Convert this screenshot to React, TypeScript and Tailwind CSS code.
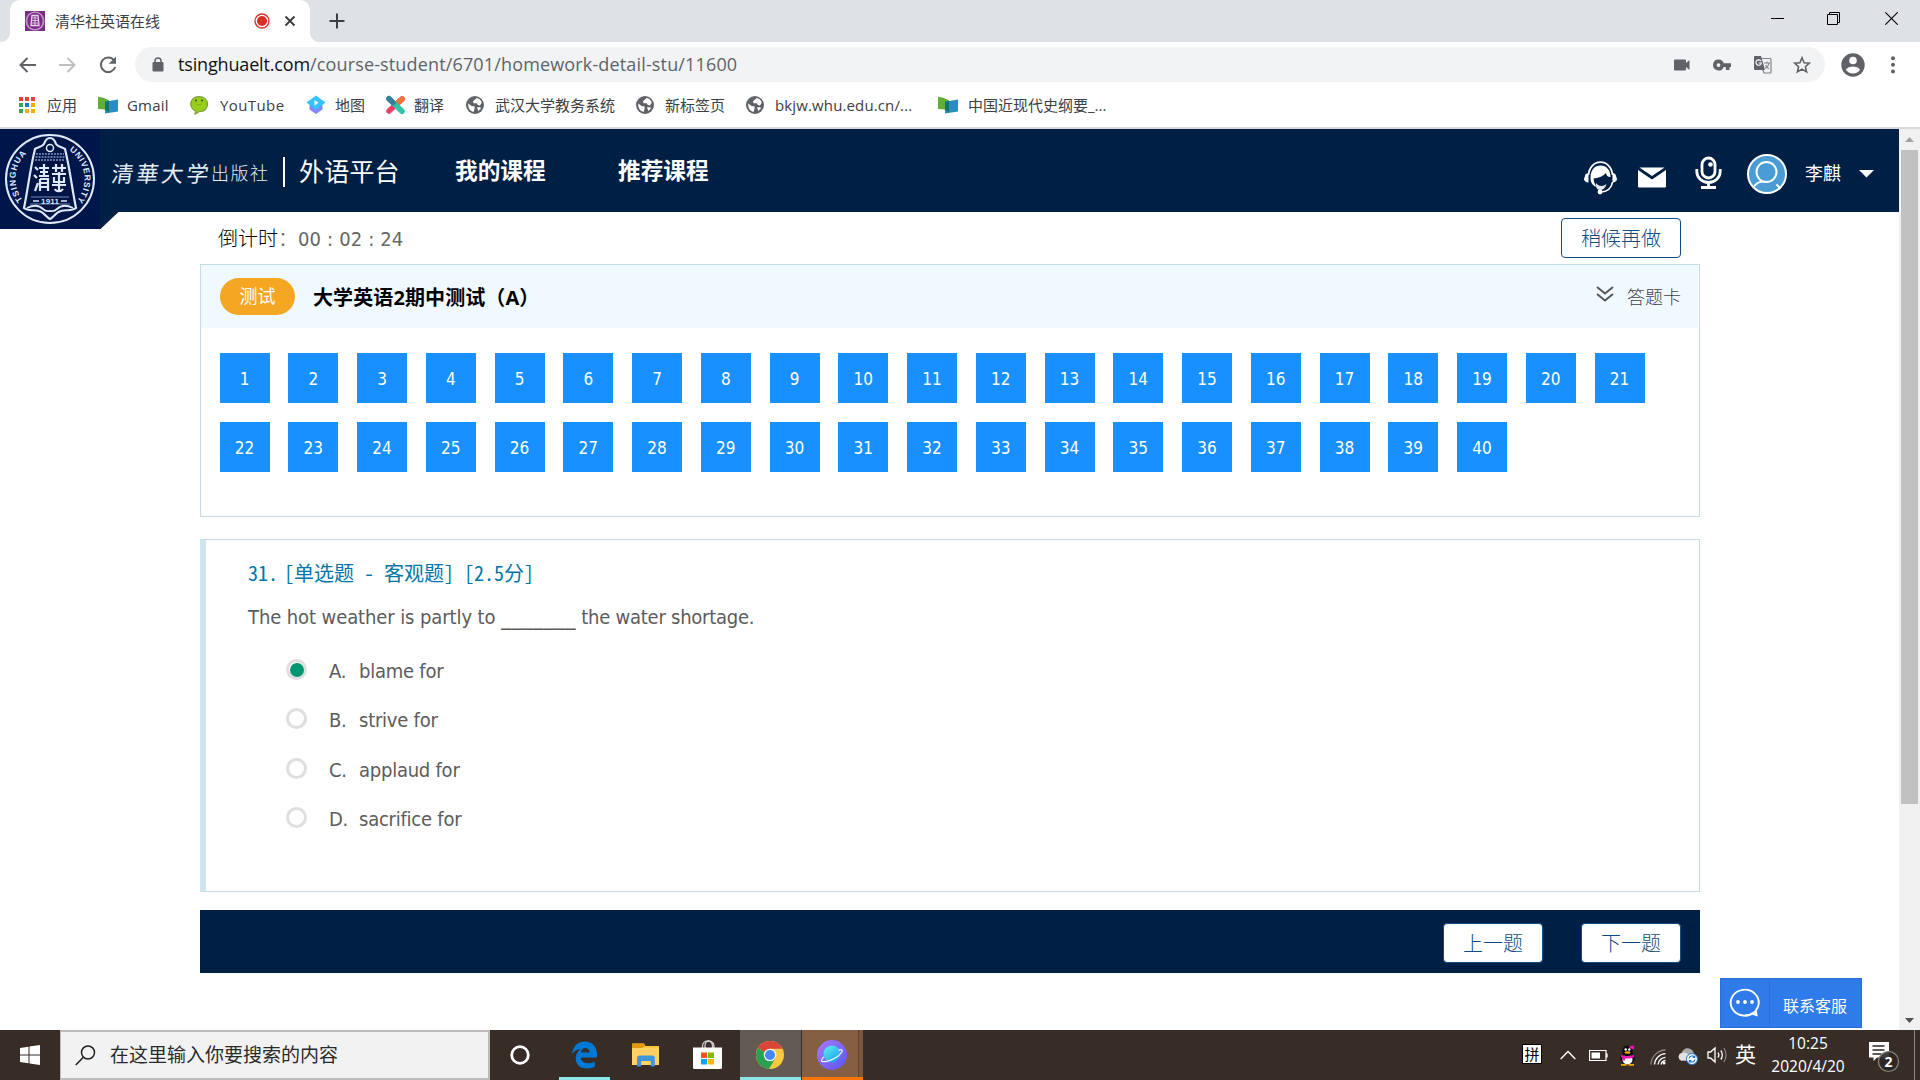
import React from "react";

const svgProps = { fill: "none", xmlns: "http://www.w3.org/2000/svg" };

/* ---------- Browser icons ---------- */
function SealIcon() {
  return (
    <svg {...svgProps} width="20" height="20" viewBox="0 0 20 20">
      <rect width="20" height="20" fill="#7b2d86" />
      <circle cx="10" cy="10" r="8.8" stroke="#c9a3cf" strokeWidth="1.2" />
      <path d="M7 4.500h6l1 10H6z" stroke="#e6d2e9" strokeWidth="1.3" />
      <path d="M7.500 7h5M7 9.500h6M7 12h6M10 5v9" stroke="#e6d2e9" strokeWidth="0.9" />
      <path d="M3 5c-1.500 3-1.500 7 0 10M17 5c1.500 3 1.500 7 0 10" stroke="#b98cc0" strokeWidth="1.400" />
    </svg>
  );
}

function GlobeIcon() {
  return (
    <svg {...svgProps} width="18" height="18" viewBox="0 0 18 18">
      <circle cx="9" cy="9" r="9" fill="#5f6368" />
      <path d="M2.200 7.500L6 10.200h2.600v2.300L7.600 15.900C4.300 15.300 1.900 12.300 2.200 7.500zM7 5.200l3.600-3.300c2.600.5 4.500 2.200 5.200 4.800l-1.900 2.800-2.100-.6-1-1.700H7.600z" fill="#fff" />
      <path d="M11 11.300h3.200l.8 1.200-2.700 2.400z" fill="#fff" />
    </svg>
  );
}

function BookIcon() {
  return (
    <svg {...svgProps} width="21" height="18" viewBox="0 0 21 18">
      <path d="M0 1c4 0 7 1 11 3.500V16c-3-2.400-6-3-11-3z" fill="#60b034" />
      <path d="M20 3.500v12L7 17.500V5.800z" fill="#2b8cc0" />
      <path d="M7 5.800l4-.9v11.100L7 14z" fill="#15727c" />
    </svg>
  );
}

function AppsIcon() {
  const cells = ["#ea4335", "#ea4335", "#ea4335", "#34a853", "#1a73e8", "#fbab06", "#34a853", "#fbab06", "#fbab06"];
  return (
    <span className="grid h-4 w-4 grid-cols-3 gap-0.5">
      {cells.map((c, i) => (
        <span key={i} style={{ background: c }} />
      ))}
    </span>
  );
}

function SmileIcon() {
  return (
    <svg {...svgProps} width="19" height="19" viewBox="0 0 19 19">
      <path d="M9 .7c5 0 8.500 2.800 8.500 7.300 0 4.600-3 7.500-8 7.500-1 0-2 1.700-4.500 2.300.6-1 .5-2.300.2-3C2.500 13.500.8 11.200.8 8 .8 3.500 4 .7 9 .7z" fill="#97cd1b" stroke="#7d9b3a" strokeWidth="1.200" />
      <circle cx="6" cy="4.600" r="1" fill="#3a4f0d" />
      <circle cx="12" cy="4.600" r="1" fill="#3a4f0d" />
      <path d="M6 8c1.800 1 4.200 1 6 0" stroke="#7fb50f" strokeWidth="0.800" />
    </svg>
  );
}

function DiamondIcon() {
  return (
    <svg {...svgProps} width="20" height="20" viewBox="0 0 20 20">
      <path d="M3.500 10v4.500L10 19l6.500-4.500V10z" fill="#8187ff" />
      <path d="M10 .5L19.500 7.500 10 15 .5 7.500z" fill="#36c3fb" />
      <path d="M8.500 5l4 2.700-4 2.800z" fill="#fff" />
    </svg>
  );
}

function CrossIcon() {
  return (
    <svg {...svgProps} width="21" height="20" viewBox="0 0 21 20">
      <path d="M17 4L4 16" stroke="#ee3f66" strokeWidth="5.500" strokeLinecap="round" />
      <path d="M17.200 4L11 9.700" stroke="#f5743c" strokeWidth="5.500" strokeLinecap="round" />
      <path d="M4 3.700L17 16.300" stroke="#2fc3a8" strokeWidth="5.500" strokeLinecap="round" />
      <path d="M4 3.700L8 7.600" stroke="#35809b" strokeWidth="5.500" strokeLinecap="round" />
    </svg>
  );
}

const bookmarks: { icon: React.ReactNode; label: string; cell: string; iconBox: string; track?: string }[] = [
  { icon: <AppsIcon />, label: "应用", cell: "w-[79px]", iconBox: "w-[28px]" },
  { icon: <BookIcon />, label: "Gmail", cell: "w-[92px]", iconBox: "w-[29px]", track: "tracking-[0.2px]" },
  { icon: <SmileIcon />, label: "YouTube", cell: "w-[116px]", iconBox: "w-[30px]", track: "tracking-[0.4px]" },
  { icon: <DiamondIcon />, label: "地图", cell: "w-[79px]", iconBox: "w-[29px]" },
  { icon: <CrossIcon />, label: "翻译", cell: "w-[81px]", iconBox: "w-[29px]" },
  { icon: <GlobeIcon />, label: "武汉大学教务系统", cell: "w-[170px]", iconBox: "w-[29px]" },
  { icon: <GlobeIcon />, label: "新标签页", cell: "w-[110px]", iconBox: "w-[29px]" },
  { icon: <GlobeIcon />, label: "bkjw.whu.edu.cn/...", cell: "w-[192px]", iconBox: "w-[29px]", track: "tracking-[0.13px]" },
  { icon: <BookIcon />, label: "中国近现代史纲要_...", cell: "w-[200px]", iconBox: "w-[30px]" },
];

function TabStrip() {
  return (
    <div className="flex h-[42px] items-end bg-[#dee1e6]">
      <div className="flex h-[42px] w-[10px] items-end justify-end">
        <svg {...svgProps} width="10" height="10"><path d="M10 0v10H0c6 0 10-4 10-10z" fill="#fff" /></svg>
      </div>
      <div className="flex h-[42px] w-[300px] items-center rounded-t-[10px] bg-white pl-[15px]">
        <SealIcon />
        <span className="ml-[10px] w-[199px] text-[15px] leading-5 text-[#3c4043]">清华社英语在线</span>
        <svg {...svgProps} width="16" height="16" className="shrink-0">
          <circle cx="8" cy="8" r="7" stroke="#d93025" strokeWidth="1.300" />
          <circle cx="8" cy="8" r="5" fill="#d93025" />
        </svg>
        <svg {...svgProps} width="12" height="12" className="ml-[14px] shrink-0">
          <path d="M1.500 1.500l9 9M10.500 1.500l-9 9" stroke="#3c4043" strokeWidth="2" />
        </svg>
      </div>
      <svg {...svgProps} width="10" height="10"><path d="M0 0v10h10C4 10 0 6 0 0z" fill="#fff" /></svg>
      <div className="ml-[9px] flex h-[42px] items-center">
        <svg {...svgProps} width="16" height="16"><path d="M8 .5v15M.5 8h15" stroke="#3c4043" strokeWidth="2" /></svg>
      </div>
      <div className="ml-auto flex h-[42px] items-center pb-[5px] pr-[22px]">
        <svg {...svgProps} width="13" height="14" className="mr-[43px]"><path d="M0 6.500h13" stroke="#000" /></svg>
        <svg {...svgProps} width="13" height="13" className="mr-[45px]"><path d="M.5 2.500h10v10h-10zM2.500 2.500v-2h10v10h-2" stroke="#000" /></svg>
        <svg {...svgProps} width="13" height="13"><path d="M.3.3l12.400 12.400M12.700.3L.3 12.700" stroke="#000" strokeWidth="1.100" /></svg>
      </div>
    </div>
  );
}

function Toolbar() {
  return (
    <div className="flex h-[45px] items-center bg-white pl-[19px]">
      <svg {...svgProps} width="17" height="16"><path d="M17 8H2M8.500 1L1.500 8l7 7" stroke="#5f6368" strokeWidth="2" /></svg>
      <svg {...svgProps} width="17" height="16" className="ml-[23px]"><path d="M0 8h15M8.500 1l7 7-7 7" stroke="#bdc1c6" strokeWidth="2" /></svg>
      <svg {...svgProps} width="18" height="18" className="ml-[23px]">
        <path d="M15.200 4.500A7.300 7.300 0 1 0 16.200 11" stroke="#5f6368" strokeWidth="2" />
        <path d="M17 .5v7.300h-7.300z" fill="#5f6368" />
      </svg>
      <div className="ml-[18px] flex h-[35px] w-[1690px] items-center rounded-full bg-[#f1f3f4] pl-[17px]">
        <svg {...svgProps} width="12" height="15">
          <rect x="0.500" y="5" width="11" height="9.500" rx="1" fill="#5f6368" />
          <path d="M3 6V4a3 3 0 0 1 6 0v2" stroke="#5f6368" strokeWidth="1.500" />
        </svg>
        <span className="ml-[14px] pb-[2px] text-[18px] leading-6 tracking-[0.150px] text-[#5f6368]">
          <span className="tracking-[-0.16px] text-[#111]">tsinghuaelt.com</span>/course-student/6701/homework-detail-stu/11600
        </span>
        <div className="ml-auto flex items-center pr-[14px]">
          <svg {...svgProps} width="16" height="12" className="mr-[23px]"><path d="M1 .5h10a1 1 0 0 1 1 1V4l3.500-3v10L12 8v2.500a1 1 0 0 1-1 1H1a1 1 0 0 1-1-1v-9a1 1 0 0 1 1-1z" fill="#5f6368" /></svg>
          <svg {...svgProps} width="18" height="12" className="mr-[22px]">
            <path fillRule="evenodd" d="M5.500.5a5.500 5.500 0 0 1 5.200 3.700H18v3.700h-1.500v3.200h-3.700V7.900h-2.100A5.500 5.500 0 1 1 5.500.5zm0 3.700a1.900 1.900 0 1 0 0 3.800 1.900 1.900 0 0 0 0-3.800z" fill="#5f6368" />
          </svg>
          <svg {...svgProps} width="19" height="19" className="mr-[21px]">
            <path d="M9 3.500h8a1 1 0 0 1 1 1V17a1 1 0 0 1-1 1h-6L9.500 14" stroke="#80868b" strokeWidth="1.200" />
            <path d="M2 1h6l4 14H2a1 1 0 0 1-1-1V2a1 1 0 0 1 1-1z" fill="#5f6368" />
            <path d="M8 6.200A2.700 2.700 0 1 0 8.300 8H5.600" stroke="#fff" strokeWidth="1.200" />
            <path d="M11 8h6M14 6.500V8M16 8c-.5 2.500-2 4.500-4 5.500M12.500 10c1 2 2 3 3.500 3.800" stroke="#80868b" strokeWidth="1.100" />
          </svg>
          <svg {...svgProps} width="18" height="18"><path d="M9 1.800l2.100 4.900 5.300.5-4 3.500 1.200 5.200L9 13.100l-4.600 2.800 1.200-5.200-4-3.500 5.300-.5z" stroke="#5f6368" strokeWidth="1.600" /></svg>
        </div>
      </div>
      <svg {...svgProps} width="24" height="24" className="ml-[16px]">
        <circle cx="12" cy="12" r="11.700" fill="#5f6368" />
        <circle cx="12" cy="7.500" r="3.800" fill="#fff" />
        <path d="M4.800 16.800c1.500-2.300 4.500-3.300 7.200-3.300s5.700 1 7.200 3.300A8.600 8.600 0 0 1 12 20.500a8.600 8.600 0 0 1-7.200-3.700z" fill="#fff" />
      </svg>
      <svg {...svgProps} width="4" height="18" className="ml-[26px]">
        <circle cx="2" cy="2.200" r="2" fill="#5f6368" /><circle cx="2" cy="8.800" r="2" fill="#5f6368" /><circle cx="2" cy="15.500" r="2" fill="#5f6368" />
      </svg>
    </div>
  );
}

function BookmarkBar() {
  return (
    <div className="flex h-[42px] items-center border-b-2 border-[#d9dadd] bg-white pb-1 pl-[19px] text-[15px] text-[#3c4043]">
      {bookmarks.map((b) => (
        <div key={b.label} className={`flex shrink-0 items-center whitespace-nowrap ${b.cell}`}>
          <span className={`flex shrink-0 items-center ${b.iconBox}`}>{b.icon}</span>
          <span className={`leading-5 ${b.track ?? ""}`}>{b.label}</span>
        </div>
      ))}
    </div>
  );
}

/* ---------- Site header ---------- */
function Emblem() {
  return (
    <svg {...svgProps} width="100" height="100" viewBox="0 0 100 100">
      <rect width="100" height="100" fill="#00164a" />
      <circle cx="50" cy="50" r="44" stroke="#dfe9fb" strokeWidth="2" />
      <defs>
        <path id="arcLeft" d="M22.800 71.200A34.500 34.500 0 0 1 27.800 23.600" />
        <path id="arcRight" d="M69.300 21.500A34.500 34.500 0 0 1 75.300 73.600" />
      </defs>
      <text fill="#dfe9fb" fontSize="8.500" fontWeight="700" fontFamily="Liberation Sans, sans-serif" textLength="51">
        <textPath href="#arcLeft" startOffset="0">TSINGHUA</textPath>
      </text>
      <text fill="#dfe9fb" fontSize="8.500" fontWeight="700" fontFamily="Liberation Sans, sans-serif" textLength="57">
        <textPath href="#arcRight" startOffset="0">UNIVERSITY</textPath>
      </text>
      <path d="M35 20c3-2 7-2 9-5 1-3 3-6 6-6s5 3 6 6c2 3 6 3 9 5 5 20 7 40 11 59-5 4-10 1-15 3-5 1-7 6-11 8-4-2-6-7-11-8-5-2-10 1-15-3 4-19 6-39 11-59z" fill="#001544" stroke="#dfe9fb" strokeWidth="2.200" />
      <circle cx="50" cy="19" r="3.500" stroke="#dfe9fb" strokeWidth="1.500" />
      <path d="M36 25h28M35.500 28h29M35 31h30" stroke="#7f96c4" strokeWidth="1.500" strokeDasharray="2 1" />
      <g stroke="#dfe9fb" strokeWidth="2.200">
        <path d="M35 38l3 3M34 46l3 3M35 62l3-8M39 39h10M40 43h8M39 47h10M44 35v12M40 50h8v12M40 50v12M40 54h8M40 58h8" />
        <path d="M52 39h14M56 35v8M62 35v8M52 45h14M59 43v20M54 48v5h10v-5M52 56h14M55 60c1 3 6 3 8 0" />
      </g>
      <path d="M31 68h38M30 75h40" stroke="#6d86b8" strokeWidth="1" />
      <path d="M33 72h6M61 72h6" stroke="#dfe9fb" strokeWidth="1.300" />
      <text x="50" y="75" textAnchor="middle" fill="#dfe9fb" fontSize="8" fontWeight="700" fontFamily="Liberation Sans, sans-serif" textLength="18">1911</text>
      <path d="M27 79c6-3 12-3 16 1 3 3 5 2 7 2s4 1 7-2c4-4 10-4 16-1" stroke="#dfe9fb" strokeWidth="1.800" />
    </svg>
  );
}

function SiteHeader() {
  return (
    <header className="relative flex h-[83px] shrink-0 items-start bg-[#001f45] text-white">
      <div className="absolute left-0 top-0 flex">
        <Emblem />
        <svg {...svgProps} width="19" height="100"><path d="M0 0h19v82.500L.5 100H0z" fill="#001f45" /></svg>
      </div>
      <div className="flex h-[86px] w-full items-center pl-[112px]">
        <div className="flex w-[157px] items-center whitespace-nowrap text-[#e8edf5]">
          <span className="w-[99px] skew-x-[-8deg] font-['Noto_Sans_CJK_SC'] text-[22px] leading-8 tracking-[3px]">清華大学</span>
          <span className="font-['Noto_Sans_CJK_SC'] text-[18px] font-light leading-8 tracking-[1.500px]">出版社</span>
        </div>
        <span className="ml-[14px] h-[30px] w-[2px] bg-white" />
        <span className="mb-[2px] ml-[14px] w-[101px] whitespace-nowrap text-[25px] leading-8 tracking-[0.2px]">外语平台</span>
        <span className="mb-[2px] ml-[55px] w-[92px] whitespace-nowrap text-[22.700px] font-bold leading-8">我的课程</span>
        <span className="mb-[2px] ml-[71px] w-[92px] whitespace-nowrap text-[22.700px] font-bold leading-8">推荐课程</span>
        <div className="ml-auto flex h-full items-center pr-[25px] pt-[4px]">
          <svg {...svgProps} width="33" height="34" viewBox="0 0 33 34" className="mt-[7px]">
            <path d="M4.500 14C5 6.500 10 1.200 16.500 1.200S28 6.500 28.500 14" stroke="#fff" strokeWidth="1.800" />
            <path d="M1 15c0-2 2-3 3.500-3v9.500C2.500 21.500 0 20 0 18zM32 15c0-2-2-3-3.500-3v9.500c2 0 4.500-1.500 4.500-3.500z" fill="#fff" />
            <path d="M6.500 17C6.500 9 10.500 4.500 16.500 4.500S26.500 9 26.500 16c-3 0-4-1.500-4.500-4-3 3.500-8 5-12.500 5.500.5 4 1.500 6.500 3.500 8.500-4-1-6.500-4-6.500-9z" fill="#fff" />
            <path d="M12 22c2.500 3.500 7 4 10.500 1-1 4-3.500 6-6.500 6s-4.500-3-4-7z" fill="#fff" opacity=".9" />
            <path d="M28.500 21c-.8 5.500-5 9.500-11.500 10" stroke="#fff" strokeWidth="1.700" />
            <circle cx="16" cy="31" r="2.400" fill="#fff" />
          </svg>
          <svg {...svgProps} width="28" height="21" className="ml-[21px] mt-[7px]">
            <path d="M0 3v15.500A1.500 1.500 0 0 0 1.500 20.500h25a1.500 1.500 0 0 0 1.500-2V3L14 12.500z" fill="#fff" />
            <path d="M1.500 .5h25L14 9z" fill="#fff" />
          </svg>
          <svg {...svgProps} width="27" height="34" viewBox="0 0 27 34" className="ml-[29px] mt-[-2px]">
            <rect x="7" y="2" width="13" height="20" rx="6.500" stroke="#fff" strokeWidth="2.800" />
            <circle cx="15.500" cy="8.500" r="2.300" fill="#fff" />
            <path d="M1.800 13v2.500c0 6 5 11 11.700 11s11.700-5 11.700-11V13M13.500 26v5M6 31.500h15" stroke="#fff" strokeWidth="2.800" />
          </svg>
          <svg {...svgProps} width="40" height="40" className="ml-[25px]">
            <circle cx="20" cy="20" r="19" fill="#4a9dd4" stroke="#fff" strokeWidth="2" />
            <circle cx="19.500" cy="18" r="10" stroke="#fff" strokeWidth="1.900" />
            <path d="M6.500 33.500C9 28.500 12.500 27.500 17 27.500M29.500 30.500l4 4" stroke="#fff" strokeWidth="1.900" />
          </svg>
          <span className="mb-[3px] ml-[18px] w-[36px] whitespace-nowrap text-[18px] leading-6">李麒</span>
          <svg {...svgProps} width="15" height="8" className="ml-[18px]"><path d="M0 0h15L7.500 7.500z" fill="#fff" /></svg>
        </div>
      </div>
    </header>
  );
}

/* ---------- Answer card ---------- */
const numbers = Array.from({ length: 40 }, (_, i) => i + 1);

function AnswerCard() {
  return (
    <section className="flex h-[253px] flex-col border border-[#c5dbe6] bg-white">
      <div className="mr-px flex h-[63px] shrink-0 items-center bg-[#f0f9ff] pl-[19px] pr-[18px]">
        <span className="flex h-[37px] w-[75px] items-center justify-center rounded-full bg-[#f5a623] text-[18px] text-white">测试</span>
        <span className="ml-[18px] pt-[3px] text-[20px] font-bold tracking-[0.1px] text-black">大学英语2期中测试（A）</span>
        <svg {...svgProps} width="18" height="16" className="mb-[6px] ml-auto"><path d="M1 1l8 6.500L17 1M1 8l8 6.500L17 8" stroke="#555" strokeWidth="1.900" /></svg>
        <span className="ml-[13px] w-[53px] whitespace-nowrap pt-[2px] text-[18px] font-light text-[#444]">答题卡</span>
      </div>
      <div className="flex w-[1460px] flex-wrap gap-x-[18.750px] gap-y-[19px] pl-[18.600px] pt-[25px]">
        {numbers.map((n) => (
          <button key={n} className="flex h-[50px] w-[50px] items-center justify-center bg-[#1890ff] pt-[3px] font-['DejaVu_Sans_Condensed','DejaVu_Sans',sans-serif] text-[17px] text-white [font-stretch:condensed]">
            {n}
          </button>
        ))}
      </div>
    </section>
  );
}

/* ---------- Question ---------- */
const options = [
  { key: "A.", text: "blame for", on: true },
  { key: "B.", text: "strive for", on: false },
  { key: "C.", text: "applaud for", on: false },
  { key: "D.", text: "sacrifice for", on: false },
];

function Question() {
  return (
    <section className="mt-[22px] h-[353px] border border-l-[6px] border-[#c5dbe6] border-l-[#d0e6ee] bg-white pl-[42px] font-['DejaVu_Sans_Condensed','DejaVu_Sans',sans-serif] text-[20px] tracking-[-0.24px] text-[#5c5c5c] [font-stretch:condensed]">
      <div className="mt-[17px] flex whitespace-pre font-['Noto_Sans_CJK_SC'] text-[20px] leading-8 tracking-normal text-[#0076a8] [font-feature-settings:'hwid']">
        <span className="w-[36px]">31.</span>
        <span>[单选题 - 客观题] [2.5分]</span>
      </div>
      <div className="mt-[12px] flex h-8 whitespace-pre leading-8">
        <span className="tracking-[-0.1px]">The hot weather is partly to </span>
        <span className="font-['Open_Sans'] text-[24.700px] tracking-normal">_______</span>
        <span> the water shortage.</span>
      </div>
      <div className="mt-[22px] pl-[38px]">
        {options.map((o) => (
          <div key={o.key} className="flex h-[49.400px] items-start leading-8">
            <span className="mt-[4px] flex h-[21px] w-[21px] items-center justify-center rounded-full border-[3px] border-[#dfdfdf] bg-white">
              {o.on && <span className="h-[14px] w-[14px] shrink-0 rounded-full bg-[#009673]" />}
            </span>
            <span className="ml-[22px] w-[30px]">{o.key}</span>
            <span>{o.text}</span>
          </div>
        ))}
      </div>
    </section>
  );
}

function NavButton({ label }: { label: string }) {
  return (
    <button className="mt-px h-[40px] w-[100px] rounded-[4px] border border-[#0f4c81] bg-white pt-[2px] text-[20px] font-light leading-none text-[#0f4c81]">{label}</button>
  );
}

function Page() {
  return (
    <div className="flex h-[901px]">
      <div className="relative flex w-[1899px] flex-col bg-white">
        <SiteHeader />
        <main className="ml-[200px] w-[1500px]">
          <div className="flex h-[52px] items-center justify-between pl-[18px] pr-[19px]">
            <span className="flex items-center whitespace-pre pt-[2px] text-[20px] text-[#666]">
              <span className="w-[60px] font-light text-black">倒计时</span>
              <span className="w-[20px] font-light">：</span>
              <span className="font-['DejaVu_Sans_Condensed','DejaVu_Sans',sans-serif] text-[20px] tracking-[0.150px] [font-stretch:condensed]">00 : 02 : 24</span>
            </span>
            <button className="h-[40px] w-[120px] rounded-[4px] border border-[#0f4c81] bg-white pt-px text-[20px] font-light text-[#0f4c81]">稍候再做</button>
          </div>
          <AnswerCard />
          <Question />
          <div className="mt-[18px] flex h-[63px] items-center justify-end gap-[38px] bg-[#001f45] pr-[19px] pt-px">
            <NavButton label="上一题" />
            <NavButton label="下一题" />
          </div>
        </main>
        <div className="absolute bottom-[2px] right-[37px] flex h-[50px] w-[142px] items-center border border-[#2b6fd6] bg-[#2f7bea] text-white">
          <span className="flex h-full w-[49px] items-center justify-center border-r border-[#2b6fd6] pb-[2px]">
            <svg {...svgProps} width="32" height="30">
              <path d="M26 24.500A14 13 0 1 1 29.500 18c-.5 2.500-1.500 4-2.700 5.500l.7 4.500-4.500-1.500c-2 1.200-4.500 1.700-7 1.700" stroke="#fff" strokeWidth="1.900" />
              <circle cx="9" cy="15" r="1.900" fill="#fff" /><circle cx="16" cy="15" r="1.900" fill="#fff" /><circle cx="23" cy="15" r="1.900" fill="#fff" />
            </svg>
          </span>
          <span className="ml-[13px] pt-[5px] text-[16px]">联系客服</span>
        </div>
      </div>
      <div className="flex w-[21px] flex-col items-center bg-[#f1f1f1]">
        <div className="flex h-[21px] items-center"><svg {...svgProps} width="9" height="5"><path d="M0 5L4.500 0 9 5z" fill="#a3a3a3" /></svg></div>
        <div className="h-[654px] w-[17px] bg-[#c1c1c1]" />
        <div className="mt-auto flex h-[20px] items-center"><svg {...svgProps} width="9" height="5"><path d="M0 0h9L4.500 5z" fill="#505050" /></svg></div>
      </div>
    </div>
  );
}

/* ---------- Taskbar ---------- */
function TaskCell({ children, cls }: { children: React.ReactNode; cls: string }) {
  return <div className={`flex h-[50px] shrink-0 items-center justify-center ${cls}`}>{children}</div>;
}

function Taskbar() {
  return (
    <div className="flex h-[50px] items-center bg-[#372d26] text-white">
      <TaskCell cls="w-[60px]">
        <svg {...svgProps} width="20" height="20"><path d="M0 3l8.500-1.300v7.800H0zM9.500 1.500L20 0v9.500H9.500zM0 10.500h8.500v7.800L0 17zM9.500 10.500H20V20L9.500 18.500z" fill="#fff" /></svg>
      </TaskCell>
      <div className="flex h-[50px] w-[430px] shrink-0 items-center border-2 border-l border-[#bcbcbc] bg-[#f2f2f2] pl-[14px]">
        <svg {...svgProps} width="21" height="21"><circle cx="13" cy="7.500" r="6.500" stroke="#222" strokeWidth="1.500" /><path d="M8.300 12.200L.8 20" stroke="#222" strokeWidth="1.600" /></svg>
        <span className="ml-[14px] whitespace-nowrap text-[19px] leading-6 text-[#2b2b2b]">在这里输入你要搜索的内容</span>
      </div>
      <TaskCell cls="w-[59px]">
        <svg {...svgProps} width="20" height="20"><circle cx="10" cy="10" r="8.300" stroke="#fff" strokeWidth="2.800" /></svg>
      </TaskCell>
      <TaskCell cls="ml-[10px] w-[51px] border-b-[3px] border-[#8ce5e8] pt-[3px]">
        <svg {...svgProps} width="25" height="28">
          <path d="M0 13C1 5 6 .5 13 .5 20.500.5 25 6 25 13v3.500H8.800c.3 4 3.500 5.700 7.500 5.700 2.700 0 4.700-.7 6.500-1.800v5.400c-2.300 1.200-5 1.700-8 1.700C8 27.500 3.700 23.500 3.700 17.500c0-4 2-7.500 5.500-9.500C5 8.500 2 10 0 13zm9-1.500h8.500C17.500 8.800 16 7 13.300 7 10.800 7 9.300 9 9 11.500z" fill="#0078d7" fillRule="evenodd" />
        </svg>
      </TaskCell>
      <TaskCell cls="ml-[11px] w-[50px]">
        <svg {...svgProps} width="28" height="24">
          <path d="M0 1.500A1 1 0 0 1 1 .5h10.500L13.500 3H27v19H0z" fill="#ffd164" />
          <path d="M0 1.500A1 1 0 0 1 1 .5h11.500v3L10.500 5H0z" fill="#e09a0b" />
          <path d="M13 3h14v2H11.500z" fill="#fbc53d" />
          <path d="M5 23.500V15a2.500 2.500 0 0 1 2.500-2.500h12.800A2.500 2.500 0 0 1 22.800 15v8.500h-4V18h-9.600v5.500z" fill="#3f96dd" />
        </svg>
      </TaskCell>
      <TaskCell cls="ml-[10px] w-[54px]">
        <svg {...svgProps} width="29" height="30" className="ml-[-2px]">
          <path d="M9.500 8V6c0-3 2.300-5 5-5s5 2 5 5v2M12 8V6c0-3 1.500-5 4-5s5 2 5 5v2" stroke="#cfcfcf" strokeWidth="1.300" />
          <path d="M0 7.500h29v20A1.500 1.500 0 0 1 27.500 29h-26A1.500 1.500 0 0 1 0 27.500z" fill="#fff" />
          <path d="M8 12.500h6v5.500H8z" fill="#f25022" /><path d="M15 12.500h6v5.500h-6z" fill="#7fba00" />
          <path d="M8 19h6v5.500H8z" fill="#00a4ef" /><path d="M15 19h6v5.500h-6z" fill="#ffb900" />
        </svg>
      </TaskCell>
      <TaskCell cls="ml-[5px] w-[61px] border-b-[3px] border-[#8ce5e8] bg-[#645a54] pr-[2px] pt-[3px]">
        <svg {...svgProps} width="28" height="28" viewBox="0 0 28 28">
          <circle cx="14" cy="14" r="14" fill="#f7c93e" />
          <path d="M14 14L1.900 7A14 14 0 0 0 13 28l6.500-11z" fill="#2aa14f" />
          <path d="M14 14L1.900 7A14 14 0 0 1 26.500 7.700H14z" fill="#dc4437" />
          <circle cx="14" cy="14" r="6.300" fill="#f3f3f3" /><circle cx="14" cy="14" r="5" fill="#4587f4" />
        </svg>
      </TaskCell>
      <TaskCell cls="ml-px w-[61px] border-b-[3px] border-[#fb7500] bg-[linear-gradient(90deg,#845f43_92%,#5f4230_92%,#5f4230_94%,#7a563b_94%)] pr-[2px] pt-[3px]">
        <svg {...svgProps} width="30" height="30" viewBox="0 0 30 30">
          <defs>
            <linearGradient id="orb" x1="0" y1="0" x2="30" y2="30" gradientUnits="userSpaceOnUse"><stop stopColor="#a878ff" /><stop offset="1" stopColor="#5a55f3" /></linearGradient>
            <linearGradient id="planet" x1="8" y1="6" x2="20" y2="22" gradientUnits="userSpaceOnUse"><stop stopColor="#5cf0ee" /><stop offset="1" stopColor="#1b9df0" /></linearGradient>
          </defs>
          <circle cx="15" cy="15" r="15" fill="url(#orb)" />
          <circle cx="15" cy="14" r="8.500" fill="url(#planet)" />
          <path d="M21.500 10c3-.8 4.300-.2 3.500 1.500-1.500 3.200-7 7-12 8.900-4.500 1.700-8.500 1.800-8.500 0 0-1.100 1-2.400 2.500-3.700" stroke="#e8f4ff" strokeWidth="1.300" />
        </svg>
      </TaskCell>

      <div className="ml-auto flex h-full items-center">
        <span className="mb-[2px] flex h-5 w-5 items-center justify-center border border-black bg-white text-[15px] leading-none text-black">拼</span>
        <svg {...svgProps} width="16" height="10" className="ml-[18px]"><path d="M.7 9L8 1.500 15.300 9" stroke="#fff" strokeWidth="1.400" /></svg>
        <svg {...svgProps} width="19" height="11" className="ml-[13px]"><path d="M.5.500h16.500v10H.5zM18 3.500v4" stroke="#fff" strokeWidth="1.200" /><path d="M2.500 2.500h8.500v6H2.500z" fill="#fff" /></svg>
        <svg {...svgProps} width="17" height="21" className="ml-[11px]">
          <ellipse cx="8.500" cy="13" rx="7.500" ry="6.500" fill="#111" />
          <ellipse cx="8.500" cy="14.500" rx="5" ry="5" fill="#fff" />
          <ellipse cx="8.500" cy="6" rx="5.200" ry="5.500" fill="#0b0b0b" />
          <circle cx="6.700" cy="4.500" r="1.200" fill="#fff" /><circle cx="10.300" cy="4.500" r="1.200" fill="#fff" />
          <ellipse cx="8.500" cy="7.500" rx="3" ry="1.200" fill="#f5a400" />
          <path d="M2 9.500c4 2.200 9 2.200 13 0v2.500c-4 2-9 2-13 0zM3.500 12h2.500v3.500H3.500zM10 1.500L15 .5v4L11 3.200z" fill="#f013b4" />
          <path d="M2 19h5.500v1.700H2zM9.500 19H15v1.700H9.500z" fill="#f5a400" />
        </svg>
        <svg {...svgProps} width="17" height="16" className="ml-[14px] mt-[3px]">
          <path d="M1 15.500A15 15 0 0 1 15.500 1" stroke="#8c8680" strokeWidth="1.300" />
          <path d="M4.500 15.500A11.500 11.500 0 0 1 15.500 4.700M8 15.500A8 8 0 0 1 15.500 8.300M11 15.500A5 5 0 0 1 15.500 11.500" stroke="#fff" strokeWidth="1.300" />
          <circle cx="14" cy="14" r="1.500" fill="#fff" />
        </svg>
        <svg {...svgProps} width="21" height="18" className="ml-[10px] mt-[2px]">
          <path d="M4 13.500a4 4 0 0 1 .5-7.500C6 2 9 .5 12 1.500c3 .5 4.500 3 5 5l2 7z" fill="#aaa" />
          <path d="M4 13.500a4 4 0 0 1 .5-7.500c3-1.500 6 0 8 3l2 4.500z" fill="#e0e0e0" />
          <circle cx="15" cy="12" r="5.500" fill="#fff" stroke="#1f74c9" strokeWidth="1" />
          <path d="M12 11.500a3 3 0 0 1 5.500-1.200M18 12.500a3 3 0 0 1-5.500 1.200M17.700 8.500v2h-2M12.300 15.500v-2h2" stroke="#1f74c9" strokeWidth="1.200" />
        </svg>
        <svg {...svgProps} width="21" height="18" className="ml-[9px]">
          <path d="M1 6h2.500L8 2v14l-4.500-4H1z" stroke="#fff" strokeWidth="1.300" />
          <path d="M11 6.500c1 1.500 1 3.500 0 5M13.800 4.500c2 2.500 2 6.500 0 9" stroke="#fff" strokeWidth="1.300" />
          <path d="M16.800 2c3 4 3 10 0 14" stroke="#8c8680" strokeWidth="1.200" />
        </svg>
        <span className="mb-[2px] ml-[7px] w-[21px] whitespace-nowrap text-[21px] leading-6">英</span>
        <span className="ml-[12px] flex w-[80px] flex-col items-center text-[15.500px] leading-[23px]">
          <span>10:25</span>
          <span>2020/4/20</span>
        </span>
        <svg {...svgProps} width="32" height="32" className="ml-[20px] mt-[4px]">
          <path d="M1 1h20v15.500H9L5.500 20v-3.500H1z" fill="#fff" />
          <path d="M4.500 5h12M4.500 9h12M4.500 13h9" stroke="#2b241f" strokeWidth="1.300" />
          <circle cx="20.500" cy="20.500" r="10" fill="#2c2723" fillOpacity="0.900" stroke="#8d8986" strokeWidth="1.200" />
          <text x="20.500" y="25.500" textAnchor="middle" fill="#fff" fontSize="14" fontWeight="700" fontFamily="Open Sans, sans-serif">2</text>
        </svg>
        <span className="ml-[14px] mr-[5px] h-[50px] w-px bg-[#8a8683]" />
      </div>
    </div>
  );
}

export default function App() {
  return (
    <div className="h-[1080px] w-[1920px] overflow-hidden bg-white font-['Open_Sans','Noto_Sans_CJK_SC',sans-serif]">
      <TabStrip />
      <Toolbar />
      <BookmarkBar />
      <Page />
      <Taskbar />
    </div>
  );
}
